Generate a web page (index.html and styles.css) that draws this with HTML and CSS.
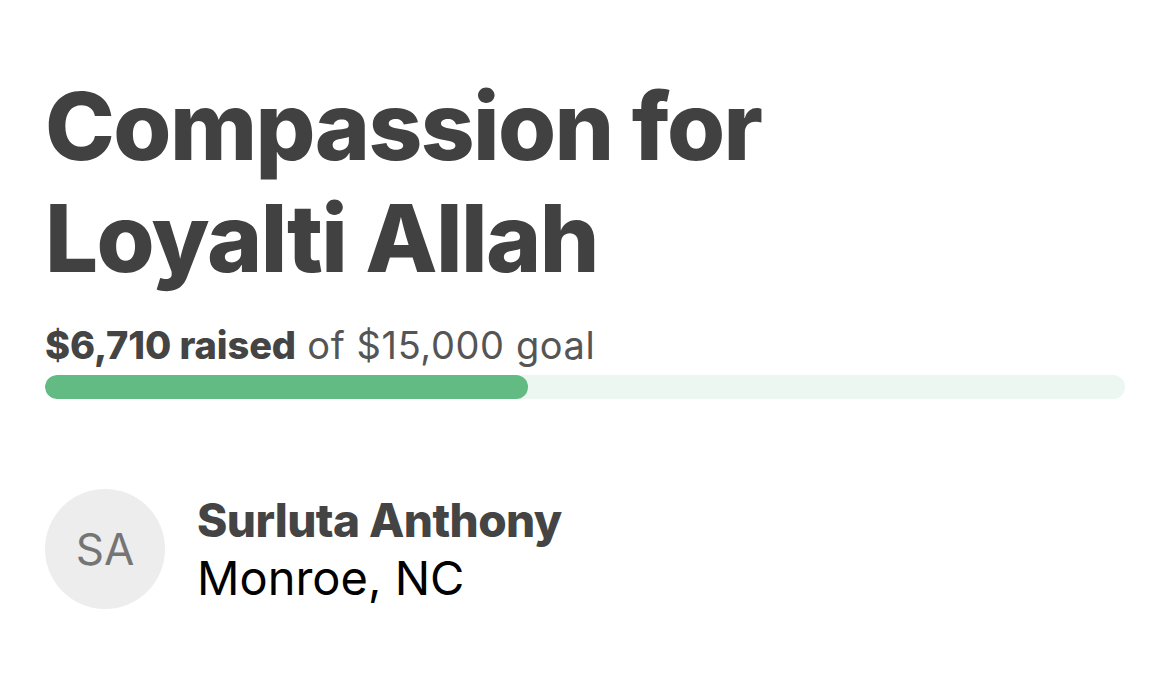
FILE: index.html
```html
<!DOCTYPE html>
<html>
<head>
<meta charset="utf-8">
<link rel="stylesheet" href="styles.css">
</head>
<body>
<main class="page">
  <h1 class="title">Compassion for<br>Loyalti Allah</h1>
  <div class="raised"><b>$6,710 raised</b> of $15,000 goal</div>
  <div class="bar"><div class="fill" style="width:44.73%"></div></div>
  <div class="organizer">
    <div class="avatar">SA</div>
    <div class="info">
      <div class="name">Surluta Anthony</div>
      <div class="loc">Monroe, NC</div>
    </div>
  </div>
</main>
</body>
</html>
```
FILE: styles.css
```css
html, body { margin: 0; padding: 0; background: #fff; }
.page {
  padding: 70px 45px 0 45px;
  font-family: Inter, "Noto Sans", sans-serif;
}
.title {
  margin: 0;
  font-size: 94px;
  line-height: 112px;
  font-weight: 800;
  color: #414141;
  letter-spacing: -1.6px;
}
.raised {
  margin-top: 28px;
  font-size: 38px;
  line-height: 46px;
  color: #555;
  letter-spacing: 0.6px;
}
.raised b { color: #444; font-weight: 800; letter-spacing: -0.1px; }
.bar {
  margin-top: 7px;
  height: 24px;
  border-radius: 12px;
  background: #edf7f1;
  overflow: hidden;
}
.fill { height: 100%; background: #62bb82; border-radius: 12px; }
.organizer {
  margin-top: 90px;
  display: flex;
  align-items: center;
  gap: 32px;
}
.avatar {
  width: 120px; height: 120px;
  border-radius: 50%;
  background: #ededed;
  color: #757575;
  font-size: 44px;
  display: flex; align-items: center; justify-content: center;
}
.name { font-size: 46px; font-weight: 800; color: #444; line-height: 58px; letter-spacing: -0.6px; }
.loc { font-size: 47px; color: #000; line-height: 58px; }
```
